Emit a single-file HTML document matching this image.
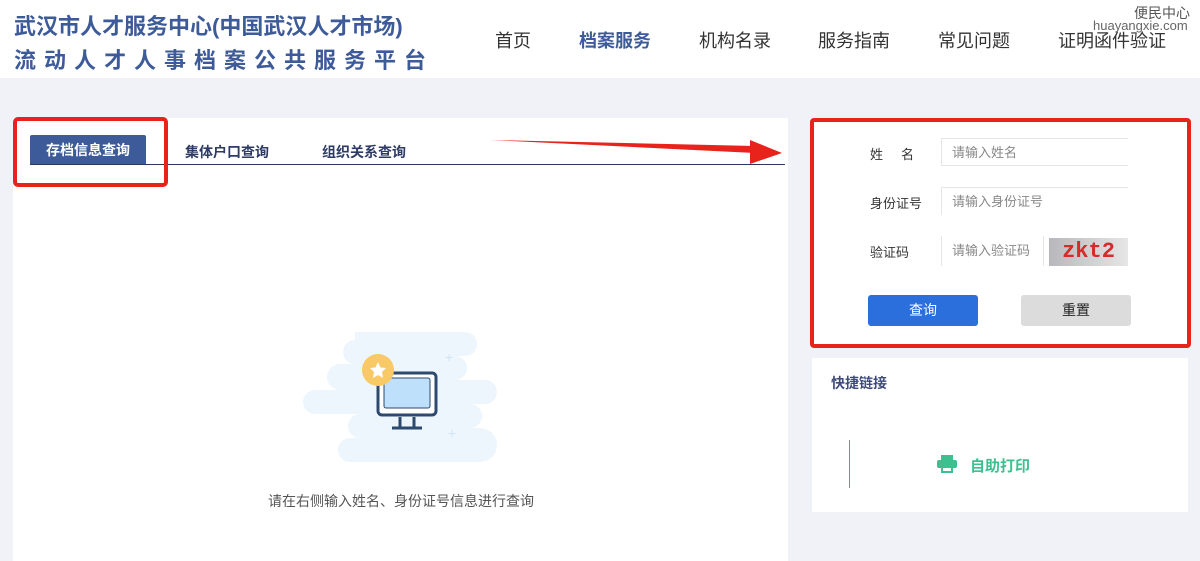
<!DOCTYPE html>
<html><head><meta charset="utf-8"><style>
body{margin:0;width:1200px;height:561px;background:#f0f2f7;font-family:"Liberation Sans","Noto Sans CJK SC",sans-serif;position:relative;overflow:hidden}
.a{position:absolute}
.nav{position:absolute;top:27px;font-size:18px;color:#333}
</style></head><body>
<div class="a" style="left:0;top:0;width:1200px;height:78px;background:#fff"></div>
<div class="a" style="left:14px;top:9px;font-size:22px;font-weight:bold;color:#3d5a99;white-space:nowrap">武汉市人才服务中心(中国武汉人才市场)</div>
<div class="a" style="left:14px;top:43px;font-size:22px;font-weight:bold;color:#3d5a99;letter-spacing:8px;white-space:nowrap">流动人才人事档案公共服务平台</div>
<div class="nav" style="left:495px">首页</div>
<div class="nav" style="left:579px;font-weight:bold;color:#3d5a99">档案服务</div>
<div class="nav" style="left:699px">机构名录</div>
<div class="nav" style="left:818px">服务指南</div>
<div class="nav" style="left:938px">常见问题</div>
<div class="nav" style="left:1058px">证明函件验证</div>
<div class="a" style="left:1134px;top:3px;font-size:14px;color:#555">便民中心</div>
<div class="a" style="left:1093px;top:18px;font-size:13px;color:#666">huayangxie.com</div>

<div class="a" style="left:13px;top:118px;width:775px;height:443px;background:#fff"></div>
<div class="a" style="left:30px;top:135px;width:116px;height:29px;background:#3d5a99;border-radius:2px 2px 0 0;color:#fff;font-size:14px;font-weight:bold;text-align:center;line-height:30px">存档信息查询</div>
<div class="a" style="left:30px;top:164px;width:755px;height:1px;background:#2b3a5a"></div>
<div class="a" style="left:185px;top:142px;font-size:14px;font-weight:bold;color:#2d3b66">集体户口查询</div>
<div class="a" style="left:322px;top:142px;font-size:14px;font-weight:bold;color:#2d3b66">组织关系查询</div>
<div class="a" style="left:13px;top:117px;width:147px;height:62px;border:4px solid #e8231c;border-radius:5px"></div>
<svg class="a" style="left:480px;top:130px" width="310" height="40"><polygon points="10,10 275,16 275,23" fill="#e8231c"/><polygon points="270,10 302,23 270,34" fill="#e8231c"/></svg>

<svg class="a" style="left:300px;top:330px" width="200" height="135">
<path d="M55,2 H165 a12,12 0 0 1 0,24 H155 a12,12 0 0 1 0,24 H185 a12,12 0 0 1 0,24 H170 a12,12 0 0 1 0,24 H180 a17,17 0 0 1 0,34 H50 a12,12 0 0 1 0,-24 H60 a12,12 0 0 1 0,-24 H15 a12,12 0 0 1 0,-24 H40 a13,13 0 0 1 0,-26 H55 a12,12 0 0 1 0,-24Z" fill="#eef6fd"/>
<rect x="78" y="43" width="58" height="42" rx="4" fill="#fff" stroke="#2d4a6e" stroke-width="3"/>
<rect x="84" y="48" width="46" height="30" rx="2" fill="#bfe0fa" stroke="#2d4a6e" stroke-width="1"/>
<path d="M100,87 v10 M114,87 v10 M92,98 h30" stroke="#2d4a6e" stroke-width="3" fill="none"/>
<circle cx="78" cy="40" r="16" fill="#f8c966"/>
<polygon points="78,32 80.5,37.5 86,38 82,42 83,48 78,45 73,48 74,42 70,38 75.5,37.5" fill="#fff"/>
<text x="145" y="32" fill="#cfe4f7" font-size="14">+</text><text x="148" y="108" fill="#cfe4f7" font-size="14">+</text>
</svg>
<div class="a" style="left:268px;top:491px;font-size:14px;color:#555">请在右侧输入姓名、身份证号信息进行查询</div>

<div class="a" style="left:812px;top:118px;width:376px;height:228px;background:#fff"></div>
<div class="a" style="left:810px;top:118px;width:373px;height:222px;border:4px solid #e8231c;border-radius:4px"></div>
<div class="a" style="left:870px;top:144px;font-size:13px;color:#333">姓&nbsp;&nbsp;&nbsp;&nbsp;&nbsp;名</div>
<div class="a" style="left:870px;top:193px;font-size:13px;color:#333">身份证号</div>
<div class="a" style="left:870px;top:242px;font-size:13px;color:#333">验证码</div>
<div class="a" style="left:941px;top:138px;width:187px;height:28px;border:1px solid #e6e6e6;border-right:none;font-size:13px;color:#888;line-height:28px;padding-left:10px;box-sizing:border-box">请输入姓名</div>
<div class="a" style="left:941px;top:187px;width:187px;height:28px;border:1px solid #e6e6e6;border-right:none;border-bottom:none;font-size:13px;color:#888;line-height:28px;padding-left:10px;box-sizing:border-box">请输入身份证号</div>
<div class="a" style="left:941px;top:236px;width:103px;height:30px;border-left:1px solid #e6e6e6;border-right:1px solid #e6e6e6;font-size:13px;color:#888;line-height:30px;padding-left:10px;box-sizing:border-box">请输入验证码</div>
<div class="a" style="left:1049px;top:238px;width:79px;height:28px;background:linear-gradient(90deg,#b8b8bc,#e6e6e6);font-size:22px;font-weight:bold;color:#d62b2b;line-height:28px;text-align:center;font-family:'Liberation Mono',monospace">zkt2</div>
<div class="a" style="left:868px;top:295px;width:110px;height:31px;background:#2a6fdb;border-radius:3px;color:#fff;font-size:14px;text-align:center;line-height:31px">查询</div>
<div class="a" style="left:1021px;top:295px;width:110px;height:31px;background:#dcdcdc;border-radius:3px;color:#222;font-size:14px;text-align:center;line-height:31px">重置</div>

<div class="a" style="left:812px;top:358px;width:376px;height:154px;background:#fff"></div>
<div class="a" style="left:831px;top:373px;font-size:14px;font-weight:bold;color:#3d4a7a">快捷链接</div>
<div class="a" style="left:849px;top:440px;width:1px;height:48px;background:#3bb58a"></div>
<svg class="a" style="left:937px;top:455px" width="20" height="18"><rect x="4" y="0" width="12" height="5" fill="#3dc090"/><rect x="0" y="5" width="20" height="8" rx="2" fill="#3dc090"/><rect x="4" y="11" width="12" height="7" fill="#3dc090"/><rect x="6" y="13" width="8" height="3" fill="#fff"/></svg>
<div class="a" style="left:970px;top:455px;font-size:15px;font-weight:bold;color:#3dc090">自助打印</div>
</body></html>
